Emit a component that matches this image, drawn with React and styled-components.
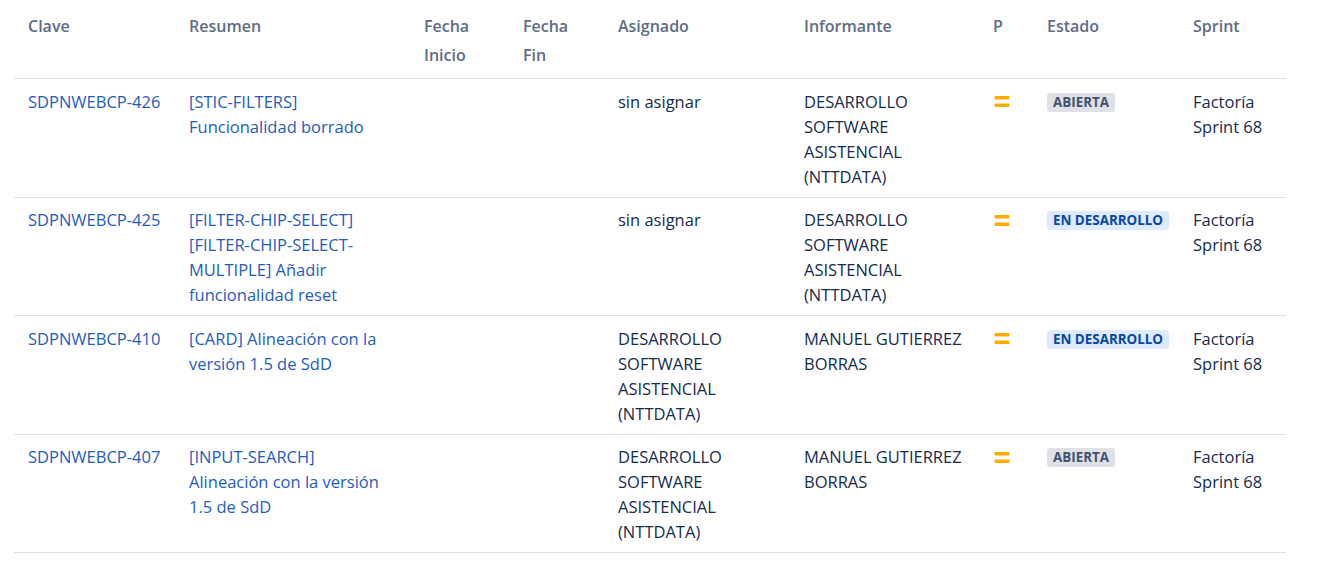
import React from "react";
import styled, { createGlobalStyle } from "styled-components";

const GlobalStyle = createGlobalStyle`
  body {
    margin: 0;
    background: #ffffff;
    font-family: "Open Sans", "Noto Sans", sans-serif;
  }
`;

const columns = [
  { key: "clave", title: ["Clave"], width: 161 },
  { key: "resumen", title: ["Resumen"], width: 235 },
  { key: "inicio", title: ["Fecha", "Inicio"], width: 99 },
  { key: "fin", title: ["Fecha", "Fin"], width: 95 },
  { key: "asignado", title: ["Asignado"], width: 186 },
  { key: "informante", title: ["Informante"], width: 189 },
  { key: "p", title: ["P"], width: 54 },
  { key: "estado", title: ["Estado"], width: 146 },
  { key: "sprint", title: ["Sprint"], width: 107 },
];

const issues = [
  {
    key: "SDPNWEBCP-426",
    summary: ["[STIC-FILTERS]", "Funcionalidad borrado"],
    assignee: ["sin asignar"],
    reporter: ["DESARROLLO", "SOFTWARE", "ASISTENCIAL", "(NTTDATA)"],
    status: "ABIERTA",
    tone: "default",
  },
  {
    key: "SDPNWEBCP-425",
    summary: ["[FILTER-CHIP-SELECT]", "[FILTER-CHIP-SELECT-", "MULTIPLE] Añadir", "funcionalidad reset"],
    assignee: ["sin asignar"],
    reporter: ["DESARROLLO", "SOFTWARE", "ASISTENCIAL", "(NTTDATA)"],
    status: "EN DESARROLLO",
    tone: "progress",
  },
  {
    key: "SDPNWEBCP-410",
    summary: ["[CARD] Alineación con la", "versión 1.5 de SdD"],
    assignee: ["DESARROLLO", "SOFTWARE", "ASISTENCIAL", "(NTTDATA)"],
    reporter: ["MANUEL GUTIERREZ", "BORRAS"],
    status: "EN DESARROLLO",
    tone: "progress",
  },
  {
    key: "SDPNWEBCP-407",
    summary: ["[INPUT-SEARCH]", "Alineación con la versión", "1.5 de SdD"],
    assignee: ["DESARROLLO", "SOFTWARE", "ASISTENCIAL", "(NTTDATA)"],
    reporter: ["MANUEL GUTIERREZ", "BORRAS"],
    status: "ABIERTA",
    tone: "default",
  },
];

const Lines = ({ lines }) => lines.map((l, i) => <Line key={i}>{l}</Line>);

// medium priority: two orange bars
const PriorityMedium = () => (
  <svg width="16" height="16" viewBox="0 0 16 16">
    <rect x="0.5" y="3" width="15" height="3.4" rx="1.2" fill="#ffab00" />
    <rect x="0.5" y="10.6" width="15" height="3.4" rx="1.2" fill="#ffab00" />
  </svg>
);

const App = () => (
  <Page>
    <GlobalStyle />
    <Table>
      <colgroup>
        {columns.map((c) => (
          <col key={c.key} style={{ width: c.width }} />
        ))}
      </colgroup>
      <thead>
        <tr>
          {columns.map((c) => (
            <HeadCell key={c.key}>
              <Lines lines={c.title} />
            </HeadCell>
          ))}
        </tr>
      </thead>
      <tbody>
        {issues.map((issue) => (
          <tr key={issue.key}>
            <Cell>
              <IssueLink href="#">{issue.key}</IssueLink>
            </Cell>
            <Cell>
              <IssueLink href="#">
                <Lines lines={issue.summary} />
              </IssueLink>
            </Cell>
            <Cell />
            <Cell />
            <Cell>
              <Lines lines={issue.assignee} />
            </Cell>
            <Cell>
              <Lines lines={issue.reporter} />
            </Cell>
            <Cell>
              <PriorityIcon>
                <PriorityMedium />
              </PriorityIcon>
            </Cell>
            <Cell>
              <Lozenge tone={issue.tone}>{issue.status}</Lozenge>
            </Cell>
            <Cell>
              <Lines lines={["Factoría", "Sprint 68"]} />
            </Cell>
          </tr>
        ))}
      </tbody>
    </Table>
  </Page>
);

const Page = styled.div`
  padding: 8px 32px 0 14px;
`;

const Table = styled.table`
  width: 1272px;
  table-layout: fixed;
  border-collapse: collapse;
  font-size: 16.5px;
  color: #172b4d;
`;

const HeadCell = styled.th`
  text-align: left;
  vertical-align: top;
  padding: 4px 14px 8px;
  line-height: 29px;
  font-size: 16px;
  font-weight: 600;
  color: #5e6c84;
  border-bottom: 1px solid #dfe1e6;
`;

const Cell = styled.td`
  vertical-align: top;
  padding: 9.5px 14px 8px;
  line-height: 25px;
  border-bottom: 1px solid #dfe1e6;
  overflow: visible;
`;

const Line = styled.div`
  white-space: nowrap;
`;

const IssueLink = styled.a`
  display: block;
  color: #1f5cc0;
  text-decoration: none;
`;

const PriorityIcon = styled.span`
  display: flex;
  margin: 4.5px 0 0 1px;
`;

const Lozenge = styled.span`
  display: inline-block;
  white-space: nowrap;
  margin-top: 4px;
  padding: 0 6px;
  border-radius: 3px;
  font-size: 13.4px;
  font-weight: 700;
  line-height: 19px;
  vertical-align: top;
  background: ${(p) => (p.tone === "progress" ? "#deebff" : "#dfe1e6")};
  color: ${(p) => (p.tone === "progress" ? "#0747a6" : "#42526e")};
`;

export default App;
